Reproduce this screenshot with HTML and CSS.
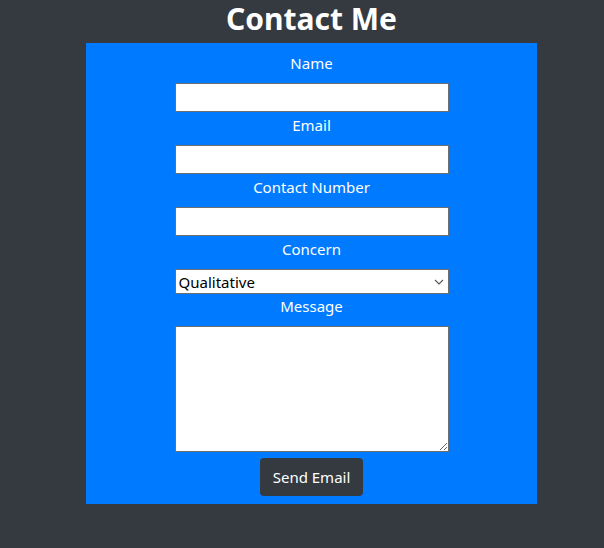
FILE: index.html
```html
<!DOCTYPE html>
<html lang="en">
<head>
<meta charset="utf-8">
<title>Contact Me</title>
<link rel="stylesheet" href="styles.css">
</head>
<body>
<div class="page">
  <h1 class="title">Contact Me</h1>
  <form class="card">
    <label class="label" for="name">Name</label>
    <input class="field" id="name" type="text">
    <label class="label" for="email">Email</label>
    <input class="field" id="email" type="email">
    <label class="label" for="phone">Contact Number</label>
    <input class="field" id="phone" type="text">
    <label class="label" for="concern">Concern</label>
    <div class="select-wrap">
      <select class="select" id="concern">
        <option>Qualitative</option>
        <option>Quantitative</option>
      </select>
      <svg class="chevron" width="10" height="6" viewBox="0 0 10 6"><path d="M1 1 L5 5 L9 1" fill="none" stroke="#555" stroke-width="1.1"/></svg>
    </div>
    <label class="label" for="message">Message</label>
    <textarea class="area" id="message"></textarea>
    <button class="btn" type="button">Send Email</button>
  </form>
</div>
</body>
</html>
```
FILE: styles.css
```css
html, body {
  margin: 0;
  padding: 0;
}
body {
  background: #343a40;
  font-family: "Noto Sans", "Open Sans", sans-serif;
  color: #fff;
  min-height: 548px;
}
.page {
  width: 451px;
  margin-left: 86px;
  display: flex;
  flex-direction: column;
}
.title {
  margin: 0;
  height: 43px;
  padding-top: 1px;
  box-sizing: border-box;
  line-height: 35px;
  font-size: 30px;
  font-weight: 700;
  text-align: center;
}
.card {
  background: #007bff;
  padding: 8px 0 8px;
  display: flex;
  flex-direction: column;
  align-items: center;
}
.label {
  display: block;
  font-size: 15px;
  line-height: 24px;
  margin-bottom: 8px;
  color: #fff;
}
.field {
  box-sizing: border-box;
  width: 274px;
  height: 29px;
  margin: 0 0 1px;
  border: 1px solid #6f6f6f;
  background: #fff;
  padding: 0 4px;
  font-size: 16px;
}
.select-wrap {
  position: relative;
  width: 274px;
  height: 25px;
}
.select {
  appearance: none;
  -webkit-appearance: none;
  box-sizing: border-box;
  width: 274px;
  height: 25px;
  margin: 0;
  border: 1px solid #6f6f6f;
  border-radius: 0;
  background: #fff;
  padding: 0 0 0 3px;
  font-family: "Noto Sans", "Open Sans", sans-serif;
  font-size: 15px;
  color: #000;
}
.chevron {
  position: absolute;
  right: 5px;
  top: 10px;
  pointer-events: none;
}
.area {
  box-sizing: border-box;
  width: 274px;
  height: 126px;
  margin: 0;
  border: 1px solid #6f6f6f;
  background: #fff;
  display: block;
}
.btn {
  margin-top: 6px;
  width: 103px;
  height: 38px;
  border: none;
  border-radius: 4px;
  background: #343a40;
  color: #fff;
  font-family: "Noto Sans", "Open Sans", sans-serif;
  font-size: 15px;
  padding: 0;
}
```
